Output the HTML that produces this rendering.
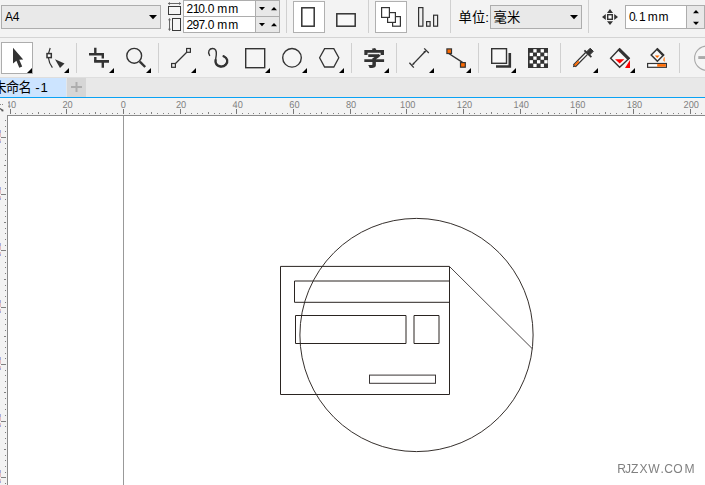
<!DOCTYPE html>
<html lang="zh-CN">
<head>
<meta charset="utf-8">
<title>未命名 -1</title>
<style>
html,body{margin:0;padding:0;background:#f3f3f3;overflow:hidden;}
body{width:705px;height:485px;position:relative;}
svg{position:absolute;left:0;top:0;display:block;}
text{font-family:"Liberation Sans","Noto Sans CJK SC",sans-serif;}
text.cjk{font-family:"Liberation Sans","Noto Sans CJK SC",sans-serif;}
text.ic{will-change:transform;}
</style>
</head>
<body>
<svg width="705" height="485" viewBox="0 0 705 485">
<rect x="0" y="0" width="705" height="485" fill="#f3f3f3" />
<rect x="0" y="37" width="705" height="1" fill="#d4d4d4" />
<rect x="0" y="77" width="705" height="1" fill="#dedede" />
<rect x="0" y="78" width="705" height="19" fill="#e8e8e8" />
<rect x="0" y="78" width="66.2" height="19" fill="#cce4ff" />
<rect x="67" y="78" width="19" height="19" fill="#d6d6d6" />
<rect x="71" y="86" width="11" height="2" fill="#adadad" />
<rect x="75.5" y="82" width="2" height="10" fill="#adadad" />
<rect x="0" y="97" width="705" height="1" fill="#0aa2f4" />
<rect x="0" y="98" width="705" height="17" fill="#f3f3f3" />
<rect x="8" y="116" width="697" height="369" fill="#fff" />
<rect x="7" y="115" width="698" height="1" fill="#8a8a8a" />
<rect x="7" y="115" width="1" height="370" fill="#8a8a8a" />
<rect x="123" y="116" width="1" height="369" fill="#999" />
<rect x="10" y="109" width="1" height="5" fill="#777" />
<rect x="15" y="113" width="1" height="1" fill="#808080" />
<rect x="21" y="113" width="1" height="1" fill="#808080" />
<rect x="27" y="113" width="1" height="1" fill="#808080" />
<rect x="32" y="113" width="1" height="1" fill="#808080" />
<rect x="38" y="112" width="1" height="2" fill="#808080" />
<rect x="44" y="113" width="1" height="1" fill="#808080" />
<rect x="49" y="113" width="1" height="1" fill="#808080" />
<rect x="55" y="113" width="1" height="1" fill="#808080" />
<rect x="61" y="113" width="1" height="1" fill="#808080" />
<rect x="66" y="109" width="1" height="5" fill="#777" />
<rect x="72" y="113" width="1" height="1" fill="#808080" />
<rect x="78" y="113" width="1" height="1" fill="#808080" />
<rect x="83" y="113" width="1" height="1" fill="#808080" />
<rect x="89" y="113" width="1" height="1" fill="#808080" />
<rect x="95" y="112" width="1" height="2" fill="#808080" />
<rect x="100" y="113" width="1" height="1" fill="#808080" />
<rect x="106" y="113" width="1" height="1" fill="#808080" />
<rect x="112" y="113" width="1" height="1" fill="#808080" />
<rect x="117" y="113" width="1" height="1" fill="#808080" />
<rect x="123" y="109" width="1" height="5" fill="#777" />
<rect x="129" y="113" width="1" height="1" fill="#808080" />
<rect x="134" y="113" width="1" height="1" fill="#808080" />
<rect x="140" y="113" width="1" height="1" fill="#808080" />
<rect x="146" y="113" width="1" height="1" fill="#808080" />
<rect x="151" y="112" width="1" height="2" fill="#808080" />
<rect x="157" y="113" width="1" height="1" fill="#808080" />
<rect x="163" y="113" width="1" height="1" fill="#808080" />
<rect x="168" y="113" width="1" height="1" fill="#808080" />
<rect x="174" y="113" width="1" height="1" fill="#808080" />
<rect x="180" y="109" width="1" height="5" fill="#777" />
<rect x="185" y="113" width="1" height="1" fill="#808080" />
<rect x="191" y="113" width="1" height="1" fill="#808080" />
<rect x="197" y="113" width="1" height="1" fill="#808080" />
<rect x="202" y="113" width="1" height="1" fill="#808080" />
<rect x="208" y="112" width="1" height="2" fill="#808080" />
<rect x="214" y="113" width="1" height="1" fill="#808080" />
<rect x="219" y="113" width="1" height="1" fill="#808080" />
<rect x="225" y="113" width="1" height="1" fill="#808080" />
<rect x="231" y="113" width="1" height="1" fill="#808080" />
<rect x="236" y="109" width="1" height="5" fill="#777" />
<rect x="242" y="113" width="1" height="1" fill="#808080" />
<rect x="248" y="113" width="1" height="1" fill="#808080" />
<rect x="253" y="113" width="1" height="1" fill="#808080" />
<rect x="259" y="113" width="1" height="1" fill="#808080" />
<rect x="265" y="112" width="1" height="2" fill="#808080" />
<rect x="270" y="113" width="1" height="1" fill="#808080" />
<rect x="276" y="113" width="1" height="1" fill="#808080" />
<rect x="282" y="113" width="1" height="1" fill="#808080" />
<rect x="287" y="113" width="1" height="1" fill="#808080" />
<rect x="293" y="109" width="1" height="5" fill="#777" />
<rect x="299" y="113" width="1" height="1" fill="#808080" />
<rect x="304" y="113" width="1" height="1" fill="#808080" />
<rect x="310" y="113" width="1" height="1" fill="#808080" />
<rect x="316" y="113" width="1" height="1" fill="#808080" />
<rect x="321" y="112" width="1" height="2" fill="#808080" />
<rect x="327" y="113" width="1" height="1" fill="#808080" />
<rect x="333" y="113" width="1" height="1" fill="#808080" />
<rect x="338" y="113" width="1" height="1" fill="#808080" />
<rect x="344" y="113" width="1" height="1" fill="#808080" />
<rect x="350" y="109" width="1" height="5" fill="#777" />
<rect x="355" y="113" width="1" height="1" fill="#808080" />
<rect x="361" y="113" width="1" height="1" fill="#808080" />
<rect x="367" y="113" width="1" height="1" fill="#808080" />
<rect x="372" y="113" width="1" height="1" fill="#808080" />
<rect x="378" y="112" width="1" height="2" fill="#808080" />
<rect x="384" y="113" width="1" height="1" fill="#808080" />
<rect x="389" y="113" width="1" height="1" fill="#808080" />
<rect x="395" y="113" width="1" height="1" fill="#808080" />
<rect x="401" y="113" width="1" height="1" fill="#808080" />
<rect x="406" y="109" width="1" height="5" fill="#777" />
<rect x="412" y="113" width="1" height="1" fill="#808080" />
<rect x="418" y="113" width="1" height="1" fill="#808080" />
<rect x="423" y="113" width="1" height="1" fill="#808080" />
<rect x="429" y="113" width="1" height="1" fill="#808080" />
<rect x="435" y="112" width="1" height="2" fill="#808080" />
<rect x="440" y="113" width="1" height="1" fill="#808080" />
<rect x="446" y="113" width="1" height="1" fill="#808080" />
<rect x="452" y="113" width="1" height="1" fill="#808080" />
<rect x="457" y="113" width="1" height="1" fill="#808080" />
<rect x="463" y="109" width="1" height="5" fill="#777" />
<rect x="469" y="113" width="1" height="1" fill="#808080" />
<rect x="474" y="113" width="1" height="1" fill="#808080" />
<rect x="480" y="113" width="1" height="1" fill="#808080" />
<rect x="486" y="113" width="1" height="1" fill="#808080" />
<rect x="491" y="112" width="1" height="2" fill="#808080" />
<rect x="497" y="113" width="1" height="1" fill="#808080" />
<rect x="503" y="113" width="1" height="1" fill="#808080" />
<rect x="508" y="113" width="1" height="1" fill="#808080" />
<rect x="514" y="113" width="1" height="1" fill="#808080" />
<rect x="520" y="109" width="1" height="5" fill="#777" />
<rect x="525" y="113" width="1" height="1" fill="#808080" />
<rect x="531" y="113" width="1" height="1" fill="#808080" />
<rect x="537" y="113" width="1" height="1" fill="#808080" />
<rect x="542" y="113" width="1" height="1" fill="#808080" />
<rect x="548" y="112" width="1" height="2" fill="#808080" />
<rect x="554" y="113" width="1" height="1" fill="#808080" />
<rect x="559" y="113" width="1" height="1" fill="#808080" />
<rect x="565" y="113" width="1" height="1" fill="#808080" />
<rect x="571" y="113" width="1" height="1" fill="#808080" />
<rect x="576" y="109" width="1" height="5" fill="#777" />
<rect x="582" y="113" width="1" height="1" fill="#808080" />
<rect x="588" y="113" width="1" height="1" fill="#808080" />
<rect x="593" y="113" width="1" height="1" fill="#808080" />
<rect x="599" y="113" width="1" height="1" fill="#808080" />
<rect x="605" y="112" width="1" height="2" fill="#808080" />
<rect x="610" y="113" width="1" height="1" fill="#808080" />
<rect x="616" y="113" width="1" height="1" fill="#808080" />
<rect x="622" y="113" width="1" height="1" fill="#808080" />
<rect x="627" y="113" width="1" height="1" fill="#808080" />
<rect x="633" y="109" width="1" height="5" fill="#777" />
<rect x="639" y="113" width="1" height="1" fill="#808080" />
<rect x="644" y="113" width="1" height="1" fill="#808080" />
<rect x="650" y="113" width="1" height="1" fill="#808080" />
<rect x="656" y="113" width="1" height="1" fill="#808080" />
<rect x="661" y="112" width="1" height="2" fill="#808080" />
<rect x="667" y="113" width="1" height="1" fill="#808080" />
<rect x="673" y="113" width="1" height="1" fill="#808080" />
<rect x="678" y="113" width="1" height="1" fill="#808080" />
<rect x="684" y="113" width="1" height="1" fill="#808080" />
<rect x="690" y="109" width="1" height="5" fill="#777" />
<rect x="695" y="113" width="1" height="1" fill="#808080" />
<rect x="701" y="113" width="1" height="1" fill="#808080" />
<text transform="translate(10.9,108) scale(0.92,1)" font-size="10" text-rendering="geometricPrecision" fill="#808080" text-anchor="middle">40</text>
<text transform="translate(67.6,108) scale(0.92,1)" font-size="10" text-rendering="geometricPrecision" fill="#808080" text-anchor="middle">20</text>
<text transform="translate(123.4,108) scale(0.92,1)" font-size="10" text-rendering="geometricPrecision" fill="#808080" text-anchor="middle">0</text>
<text transform="translate(181.0,108) scale(0.92,1)" font-size="10" text-rendering="geometricPrecision" fill="#808080" text-anchor="middle">20</text>
<text transform="translate(237.7,108) scale(0.92,1)" font-size="10" text-rendering="geometricPrecision" fill="#808080" text-anchor="middle">40</text>
<text transform="translate(294.4,108) scale(0.92,1)" font-size="10" text-rendering="geometricPrecision" fill="#808080" text-anchor="middle">60</text>
<text transform="translate(351.1,108) scale(0.92,1)" font-size="10" text-rendering="geometricPrecision" fill="#808080" text-anchor="middle">80</text>
<text transform="translate(407.8,108) scale(0.92,1)" font-size="10" text-rendering="geometricPrecision" fill="#808080" text-anchor="middle">100</text>
<text transform="translate(464.5,108) scale(0.92,1)" font-size="10" text-rendering="geometricPrecision" fill="#808080" text-anchor="middle">120</text>
<text transform="translate(521.2,108) scale(0.92,1)" font-size="10" text-rendering="geometricPrecision" fill="#808080" text-anchor="middle">140</text>
<text transform="translate(577.8,108) scale(0.92,1)" font-size="10" text-rendering="geometricPrecision" fill="#808080" text-anchor="middle">160</text>
<text transform="translate(634.5,108) scale(0.92,1)" font-size="10" text-rendering="geometricPrecision" fill="#808080" text-anchor="middle">180</text>
<text transform="translate(691.2,108) scale(0.92,1)" font-size="10" text-rendering="geometricPrecision" fill="#808080" text-anchor="middle">200</text>
<rect x="5" y="120" width="1" height="1" fill="#808080" />
<rect x="5" y="126" width="1" height="1" fill="#808080" />
<rect x="5" y="131" width="1" height="1" fill="#808080" />
<rect x="1" y="137" width="5" height="1" fill="#808080" />
<rect x="0" y="130" width="1" height="3" fill="#a6aede" />
<rect x="0" y="133" width="1" height="4" fill="#e2bcc2" />
<rect x="0" y="139" width="1" height="2" fill="#e2bcc2" />
<rect x="0" y="141" width="1" height="2" fill="#a6aede" />
<rect x="5" y="143" width="1" height="1" fill="#808080" />
<rect x="5" y="148" width="1" height="1" fill="#808080" />
<rect x="5" y="154" width="1" height="1" fill="#808080" />
<rect x="5" y="160" width="1" height="1" fill="#808080" />
<rect x="4" y="165" width="2" height="1" fill="#808080" />
<rect x="5" y="171" width="1" height="1" fill="#808080" />
<rect x="5" y="177" width="1" height="1" fill="#808080" />
<rect x="5" y="182" width="1" height="1" fill="#808080" />
<rect x="5" y="188" width="1" height="1" fill="#808080" />
<rect x="1" y="194" width="5" height="1" fill="#808080" />
<rect x="0" y="187" width="1" height="3" fill="#a6aede" />
<rect x="0" y="190" width="1" height="4" fill="#e2bcc2" />
<rect x="0" y="196" width="1" height="2" fill="#e2bcc2" />
<rect x="0" y="198" width="1" height="2" fill="#a6aede" />
<rect x="5" y="199" width="1" height="1" fill="#808080" />
<rect x="5" y="205" width="1" height="1" fill="#808080" />
<rect x="5" y="211" width="1" height="1" fill="#808080" />
<rect x="5" y="216" width="1" height="1" fill="#808080" />
<rect x="4" y="222" width="2" height="1" fill="#808080" />
<rect x="5" y="228" width="1" height="1" fill="#808080" />
<rect x="5" y="233" width="1" height="1" fill="#808080" />
<rect x="5" y="239" width="1" height="1" fill="#808080" />
<rect x="5" y="245" width="1" height="1" fill="#808080" />
<rect x="1" y="250" width="5" height="1" fill="#808080" />
<rect x="0" y="243" width="1" height="3" fill="#a6aede" />
<rect x="0" y="246" width="1" height="4" fill="#e2bcc2" />
<rect x="0" y="252" width="1" height="2" fill="#e2bcc2" />
<rect x="0" y="254" width="1" height="2" fill="#a6aede" />
<rect x="5" y="256" width="1" height="1" fill="#808080" />
<rect x="5" y="262" width="1" height="1" fill="#808080" />
<rect x="5" y="267" width="1" height="1" fill="#808080" />
<rect x="5" y="273" width="1" height="1" fill="#808080" />
<rect x="4" y="279" width="2" height="1" fill="#808080" />
<rect x="5" y="285" width="1" height="1" fill="#808080" />
<rect x="5" y="290" width="1" height="1" fill="#808080" />
<rect x="5" y="296" width="1" height="1" fill="#808080" />
<rect x="5" y="302" width="1" height="1" fill="#808080" />
<rect x="1" y="307" width="5" height="1" fill="#808080" />
<rect x="0" y="300" width="1" height="3" fill="#a6aede" />
<rect x="0" y="303" width="1" height="4" fill="#e2bcc2" />
<rect x="0" y="309" width="1" height="2" fill="#e2bcc2" />
<rect x="0" y="311" width="1" height="2" fill="#a6aede" />
<rect x="5" y="313" width="1" height="1" fill="#808080" />
<rect x="5" y="319" width="1" height="1" fill="#808080" />
<rect x="5" y="324" width="1" height="1" fill="#808080" />
<rect x="5" y="330" width="1" height="1" fill="#808080" />
<rect x="4" y="336" width="2" height="1" fill="#808080" />
<rect x="5" y="341" width="1" height="1" fill="#808080" />
<rect x="5" y="347" width="1" height="1" fill="#808080" />
<rect x="5" y="353" width="1" height="1" fill="#808080" />
<rect x="5" y="358" width="1" height="1" fill="#808080" />
<rect x="1" y="364" width="5" height="1" fill="#808080" />
<rect x="0" y="357" width="1" height="3" fill="#a6aede" />
<rect x="0" y="360" width="1" height="4" fill="#e2bcc2" />
<rect x="0" y="366" width="1" height="2" fill="#e2bcc2" />
<rect x="0" y="368" width="1" height="2" fill="#a6aede" />
<rect x="5" y="370" width="1" height="1" fill="#808080" />
<rect x="5" y="375" width="1" height="1" fill="#808080" />
<rect x="5" y="381" width="1" height="1" fill="#808080" />
<rect x="5" y="387" width="1" height="1" fill="#808080" />
<rect x="4" y="392" width="2" height="1" fill="#808080" />
<rect x="5" y="398" width="1" height="1" fill="#808080" />
<rect x="5" y="404" width="1" height="1" fill="#808080" />
<rect x="5" y="409" width="1" height="1" fill="#808080" />
<rect x="5" y="415" width="1" height="1" fill="#808080" />
<rect x="1" y="421" width="5" height="1" fill="#808080" />
<rect x="0" y="414" width="1" height="3" fill="#a6aede" />
<rect x="0" y="417" width="1" height="4" fill="#e2bcc2" />
<rect x="0" y="423" width="1" height="2" fill="#e2bcc2" />
<rect x="0" y="425" width="1" height="2" fill="#a6aede" />
<rect x="5" y="426" width="1" height="1" fill="#808080" />
<rect x="5" y="432" width="1" height="1" fill="#808080" />
<rect x="5" y="438" width="1" height="1" fill="#808080" />
<rect x="5" y="443" width="1" height="1" fill="#808080" />
<rect x="4" y="449" width="2" height="1" fill="#808080" />
<rect x="5" y="455" width="1" height="1" fill="#808080" />
<rect x="5" y="460" width="1" height="1" fill="#808080" />
<rect x="5" y="466" width="1" height="1" fill="#808080" />
<rect x="5" y="472" width="1" height="1" fill="#808080" />
<rect x="1" y="477" width="5" height="1" fill="#808080" />
<rect x="0" y="470" width="1" height="3" fill="#a6aede" />
<rect x="0" y="473" width="1" height="4" fill="#e2bcc2" />
<rect x="0" y="479" width="1" height="2" fill="#e2bcc2" />
<rect x="0" y="481" width="1" height="2" fill="#a6aede" />
<rect x="5" y="483" width="1" height="1" fill="#808080" />
<rect x="0" y="98" width="8" height="12" fill="#f3f3f3" />
<rect x="0" y="104" width="1" height="1" fill="#888" />
<rect x="2" y="104" width="1" height="1" fill="#888" />
<path d="M0,108.5 L2.6,110.6" fill="none" stroke="#555" stroke-width="1.3" />
<rect x="1.6" y="109.6" width="1.8" height="1.8" fill="#555" />
<rect x="1.5" y="5.5" width="159" height="23" fill="#e9e9e9" stroke="#adadad" stroke-width="1" />
<text x="5 12.7" y="21.3" font-size="12" fill="#000" >A4</text>
<path d="M149,15 L157,15 L153,19.3 Z" fill="#000" />
<line x1="168.6" y1="3.5" x2="180.4" y2="3.5" stroke="#666" stroke-width="1" />
<path d="M167.8,3.5 l2.2,-1.5 v3 Z M181.2,3.5 l-2.2,-1.5 v3 Z" fill="#666" />
<rect x="168.5" y="6.5" width="12" height="8" fill="#f5f5f5" stroke="#3a3a3a" stroke-width="1" />
<line x1="169.5" y1="18.8" x2="169.5" y2="30.2" stroke="#666" stroke-width="1" />
<path d="M169.5,18 l-1.5,2.2 h3 Z M169.5,31 l-1.5,-2.2 h3 Z" fill="#666" />
<rect x="172.5" y="18.5" width="8" height="12" fill="#f5f5f5" stroke="#3a3a3a" stroke-width="1" />
<rect x="183.5" y="0.5" width="96" height="16" fill="#fff" stroke="#adadad" stroke-width="1" />
<rect x="183.5" y="16.5" width="96" height="16" fill="#fff" stroke="#adadad" stroke-width="1" />
<rect x="256" y="1" width="23" height="15" fill="#e8e8e8" />
<rect x="256" y="17" width="23" height="15" fill="#e8e8e8" />
<rect x="255" y="0" width="1" height="33" fill="#adadad" />
<text x="186.6 192.8 198.2 204.6 207.8 214 217.3 228.2" y="13.2" font-size="12" fill="#000" >210.0 mm</text>
<text x="186.6 192.6 198.4 204.6 207.8 214 217.3 228.2" y="29.2" font-size="12" fill="#000" >297.0 mm</text>
<path d="M259,7 h6 l-3,3.3 Z" fill="#000" />
<path d="M271,10.2 h6 l-3,-3.2 Z" fill="#000" />
<path d="M259,23 h6 l-3,3.3 Z" fill="#000" />
<path d="M271,26.2 h6 l-3,-3.2 Z" fill="#000" />
<rect x="286" y="0" width="1" height="33" fill="#d0d0d0" />
<rect x="368" y="0" width="1" height="33" fill="#d0d0d0" />
<rect x="450" y="0" width="1" height="33" fill="#d0d0d0" />
<rect x="588" y="0" width="1" height="33" fill="#d0d0d0" />
<rect x="293.5" y="1.5" width="31" height="31" fill="#fff" stroke="#b0b0b0" stroke-width="1" />
<rect x="301.8" y="7.8" width="12.4" height="18.4" fill="#fff" stroke="#333" stroke-width="1.5" />
<rect x="336.8" y="13.8" width="18.4" height="12.4" fill="#f8f8f8" stroke="#333" stroke-width="1.5" />
<rect x="375.5" y="1.5" width="31" height="31" fill="#fff" stroke="#b0b0b0" stroke-width="1" />
<rect x="392.6" y="16.6" width="7.8" height="9.6" fill="#fff" stroke="#333" stroke-width="1.2" />
<rect x="387.6" y="12.6" width="7.8" height="9.8" fill="#fff" stroke="#333" stroke-width="1.2" />
<rect x="381.6" y="7.6" width="7.8" height="9.8" fill="#fff" stroke="#333" stroke-width="1.2" />
<rect x="418.6" y="7.6" width="4.3" height="18.6" fill="#f0f0f0" stroke="#333" stroke-width="1.2" />
<rect x="426.6" y="21.6" width="3.5" height="4.6" fill="#f0f0f0" stroke="#333" stroke-width="1.2" />
<rect x="433.6" y="15.2" width="4" height="11" fill="#f0f0f0" stroke="#333" stroke-width="1.2" />
<text x="458.6" y="21.6" font-size="13.3" fill="#000" class="cjk">单位:</text>
<rect x="490.5" y="5.5" width="91" height="23" fill="#e9e9e9" stroke="#adadad" stroke-width="1" />
<text x="493.6" y="21.6" font-size="13.3" fill="#000" class="cjk">毫米</text>
<path d="M570,15 L578,15 L574,19.3 Z" fill="#000" />
<rect x="607.7" y="14.7" width="4.6" height="4.6" fill="#fff" stroke="#333" stroke-width="1.4" />
<path d="M610,9 l3,3.9 h-6 Z M610,25 l3,-3.8 h-6 Z M602,17 l3.8,-3 v6 Z M618,17 l-3.8,-3 v6 Z" fill="#333" />
<rect x="625.5" y="5.5" width="79" height="23" fill="#fff" stroke="#adadad" stroke-width="1" />
<rect x="687" y="6" width="17" height="22" fill="#e8e8e8" />
<rect x="686" y="5" width="1" height="24" fill="#adadad" />
<text x="629 634.6 639 645 647.7 658.4" y="21.3" font-size="12" fill="#000" >0.1 mm</text>
<path d="M693,13.3 h6 l-3,-3.3 Z" fill="#000" />
<path d="M693,21.8 h6 l-3,3.3 Z" fill="#000" />
<rect x="76" y="43" width="1" height="30" fill="#d0d0d0" />
<rect x="158" y="43" width="1" height="30" fill="#d0d0d0" />
<rect x="351" y="43" width="1" height="30" fill="#d0d0d0" />
<rect x="396" y="43" width="1" height="30" fill="#d0d0d0" />
<rect x="478" y="43" width="1" height="30" fill="#d0d0d0" />
<rect x="560" y="43" width="1" height="30" fill="#d0d0d0" />
<rect x="679" y="43" width="1" height="30" fill="#d0d0d0" />
<rect x="1.5" y="42.5" width="31" height="31" fill="#fff" stroke="#adadad" stroke-width="1" />
<path d="M13,47.8 L13,63.6 L16.4,60.8 L19.3,67.8 L22.2,66.6 L19.3,59.8 L23.2,59.6 Z" fill="#333" />
<path d="M32,68 L32,73 L27,73 Z" fill="#000" />
<path d="M50.2,48 C47.6,54 47.4,61 52.4,67.6" fill="none" stroke="#333" stroke-width="1.2" />
<rect x="47" y="53.6" width="4.3" height="4" fill="#fff" stroke="#333" stroke-width="1.5" />
<path d="M55,59.3 L64.5,63.5 L60,68 Z" fill="#333" />
<path d="M69,68 L69,73 L64,73 Z" fill="#000" />
<path d="M95.3,47.8 V54.2 M102.8,54.2 V58.5 M95.3,56.9 V61.4 M102.8,61.4 V67.8" fill="none" stroke="#333" stroke-width="2.4" />
<path d="M89,54.25 H104 M94.1,61.35 H109" fill="none" stroke="#333" stroke-width="2.7" />
<path d="M114,68 L114,73 L109,73 Z" fill="#000" />
<circle cx="134.2" cy="55.8" r="7.4" fill="none" stroke="#333" stroke-width="1.4"/>
<path d="M139.8,61.6 L145.2,67" fill="none" stroke="#333" stroke-width="2.4" />
<path d="M151,68 L151,73 L146,73 Z" fill="#000" />
<line x1="175" y1="64" x2="187" y2="52" stroke="#333" stroke-width="1.3" />
<rect x="171.6" y="63.5" width="3.8" height="3.8" fill="#f0f0f0" stroke="#333" stroke-width="1.2" />
<rect x="186.6" y="48.5" width="3.8" height="3.8" fill="#f0f0f0" stroke="#333" stroke-width="1.2" />
<path d="M196,68 L196,73 L191,73 Z" fill="#000" />
<path d="M209.6,55.4 C207.2,51.5 209.5,48.5 212.6,48.5 C215.6,48.5 216.6,51 216.3,54.5 C216,58.5 214.8,61 216,63.6 C217.6,67 223,67.6 225.8,64.6 C228.4,61.8 227.6,58 223.6,56.2" fill="none" stroke="#333" stroke-width="1.4" stroke-linecap="round"/>
<path d="M215.6,60 C215.3,61.4 215.4,62.4 216,63.6 C217.6,67 223,67.6 225.8,64.6 C228.4,61.8 227.6,58 223.6,56.2" fill="none" stroke="#333" stroke-width="2.3" stroke-linecap="round"/>
<rect x="245.7" y="48.7" width="19" height="19" fill="#f5f5f5" stroke="#333" stroke-width="1.4" />
<path d="M270,68 L270,73 L265,73 Z" fill="#000" />
<circle cx="292" cy="57.8" r="9.3" fill="#f5f5f5" stroke="#333" stroke-width="1.4"/>
<path d="M307,68 L307,73 L302,73 Z" fill="#000" />
<path d="M319.6,57.8 L324.6,48.6 L333.8,48.6 L338.8,57.8 L333.8,67 L324.6,67 Z" fill="#f5f5f5" stroke="#333" stroke-width="1.3" />
<path d="M344,68 L344,73 L339,73 Z" fill="#000" />
<text transform="translate(362.9,66) scale(1.12,1)" font-size="20" font-weight="900" fill="#333" class="cjk ic">字</text>
<path d="M389,68 L389,73 L384,73 Z" fill="#000" />
<line x1="412.6" y1="64.6" x2="425.6" y2="51" stroke="#333" stroke-width="1.3" />
<line x1="409.4" y1="62.8" x2="413.8" y2="67.6" stroke="#333" stroke-width="1.3" />
<line x1="424.2" y1="48.4" x2="428.8" y2="53" stroke="#333" stroke-width="1.3" />
<path d="M412.2,65 l2.6,-1 l-1.6,-1.6 Z M426,50.6 l-2.6,1 l1.6,1.6 Z" fill="#333" />
<path d="M434,68 L434,73 L429,73 Z" fill="#000" />
<line x1="448" y1="53" x2="462.5" y2="62.3" stroke="#333" stroke-width="1.4" />
<rect x="446.9" y="48.9" width="4.6" height="4.6" fill="#ff6a00" stroke="#333" stroke-width="1.2" />
<rect x="460.5" y="62.6" width="4.8" height="4.6" fill="#ff6a00" stroke="#333" stroke-width="1.2" />
<path d="M471,68 L471,73 L466,73 Z" fill="#000" />
<path d="M496,66.5 H509.8 V53" fill="none" stroke="#333" stroke-width="2.6" />
<rect x="491.7" y="48.7" width="14.8" height="14.6" fill="#f8f8f8" stroke="#333" stroke-width="1.4" />
<path d="M516,68 L516,73 L511,73 Z" fill="#000" />
<rect x="528" y="48" width="20" height="20" fill="#333" />
<rect x="533.31" y="49.15" width="3.3" height="3.3" fill="#fff" />
<rect x="540.63" y="49.15" width="3.3" height="3.3" fill="#fff" />
<rect x="529.65" y="52.81" width="3.3" height="3.3" fill="#fff" />
<rect x="536.97" y="52.81" width="3.3" height="3.3" fill="#fff" />
<rect x="544.29" y="52.81" width="3.3" height="3.3" fill="#fff" />
<rect x="533.31" y="56.47" width="3.3" height="3.3" fill="#fff" />
<rect x="540.63" y="56.47" width="3.3" height="3.3" fill="#fff" />
<rect x="529.65" y="60.13" width="3.3" height="3.3" fill="#fff" />
<rect x="536.97" y="60.13" width="3.3" height="3.3" fill="#fff" />
<rect x="544.29" y="60.13" width="3.3" height="3.3" fill="#fff" />
<rect x="533.31" y="63.79" width="3.3" height="3.3" fill="#fff" />
<rect x="540.63" y="63.79" width="3.3" height="3.3" fill="#fff" />
<path d="M574.4,65.8 L586.6,53.4" fill="none" stroke="#333" stroke-width="4" />
<path d="M572.9,67.2 L576,66.6 L573.6,64.2 Z" fill="#333" />
<path d="M575.2,65 L586.6,53.4" fill="none" stroke="#fafafa" stroke-width="1.4" />
<path d="M574.6,65.6 L578.8,61.4" fill="none" stroke="#ff6a00" stroke-width="1.8" />
<path d="M584.4,50.4 L591.4,57.2" fill="none" stroke="#333" stroke-width="1.8" />
<path d="M590.2,48.2 L593.3,51.3 L589.6,55 L586.5,51.9 Z" fill="#333" stroke="#333" stroke-width="1" stroke-linejoin="round"/>
<path d="M598,68 L598,73 L593,73 Z" fill="#000" />
<path d="M619.6,48.8 L629.2,58.2 L619.6,67.3 L610.6,58.2 Z" fill="#f8f8f8" stroke="#333" stroke-width="1.4" />
<path d="M619.6,47.9 L630,58.2 L627.9,60.3 L617.5,50 Z" fill="#333" />
<path d="M615,59.2 H624.4 L619.7,63.6 Z" fill="#f00" />
<path d="M630,60 V68 H625 Z" fill="#f00" />
<path d="M635,68 L635,73 L630,73 Z" fill="#000" />
<path d="M657.4,48.8 L663.6,55 L657.4,61.2 L651.2,55 Z" fill="#f8f8f8" stroke="#333" stroke-width="1.5" />
<path d="M657.4,48 L664.3,55 L662.8,56.5 L656,49.5 Z" fill="#333" />
<path d="M654.8,55.6 H659.6 L657.2,58 Z" fill="#ff6a00" />
<path d="M664.4,57.4 C663,59.4 663.2,61 664.6,61.4 Z" fill="#ff8a30" stroke="#ff8a30" stroke-width="0.6" />
<rect x="647.6" y="63.5" width="18.8" height="3.8" fill="#fff" stroke="#333" stroke-width="1.2" />
<rect x="657.2" y="64.1" width="8.6" height="2.6" fill="#ff6a00" />
<circle cx="706.7" cy="58.2" r="12.1" fill="#f5f5f5" stroke="#a8a8a8" stroke-width="1.1"/>
<rect x="698.3" y="56.1" width="7" height="2.9" fill="#a9a9a9" />
<g fill="none" stroke="#2a2421" stroke-width="1">
<path d="M280.5,266.4 H449.5 V394.5 H280.5 Z"/>
<circle cx="416.5" cy="335" r="116.6" stroke-width="0.95"/>
<line x1="449.5" y1="266.5" x2="532.6" y2="349" stroke="#4a4545"/>
<path d="M449.5,281 H294.5 V302.3 H449.5" />
<path d="M295.5,315.5 H406 V343.5 H295.5 Z"/>
<path d="M414,315.5 H439 V343.5 H414 Z"/>
<rect x="369.5" y="375.1" width="66" height="8.2" stroke="#3a3535"/>
</g>
<text y="472.8" font-size="12.1" fill="#808080" class="ic" x="617.2 625 631.1 639.4 648.2 660.6 664.2 673.2 684.4">RJZXW.COM</text>
<text x="-6.6 5.9 18.5 31 35.2 40.6" y="91.5" font-size="13.2" fill="#000" class="cjk">未命名 -1</text>
</svg>
</body>
</html>
